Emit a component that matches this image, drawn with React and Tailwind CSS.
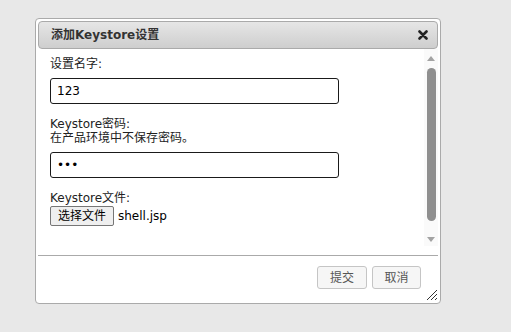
import React from 'react';

const FONT = { fontFamily: '"DejaVu Sans", "Noto Sans CJK SC", sans-serif' };

function CloseIcon() {
  return (
    <svg width="10" height="10" viewBox="0 0 10 10">
      <path d="M1.5 1.5 L8.5 8.5 M8.5 1.5 L1.5 8.5" stroke="#222" strokeWidth="2.6" strokeLinecap="round" />
    </svg>
  );
}

function Arrow({ down }) {
  return (
    <svg width="8" height="5" viewBox="0 0 8 5">
      <path d={down ? 'M0 0 L8 0 L4 5 Z' : 'M0 5 L8 5 L4 0 Z'} fill="#a3a3a3" />
    </svg>
  );
}

function ResizeHandle() {
  return (
    <svg width="12" height="12" viewBox="0 0 12 12" className="absolute right-0 bottom-0">
      <path d="M1 11 L11 1 M5 11 L11 5 M9 11 L11 9" stroke="#333" strokeWidth="1" />
    </svg>
  );
}

export default function App() {
  return (
    <div className="min-h-screen bg-[#e8e8e8] pl-[35px] pt-[18px]" style={FONT}>
      <div className="w-[406px] h-[286px] bg-white border border-[#aaaaaa] rounded-[4px] p-[2px] flex flex-col">
        {/* title bar */}
        <div className="h-[28px] shrink-0 border border-[#aaaaaa] rounded-[4px] bg-linear-to-b from-[#e6e6e6] to-[#cecece] flex items-center justify-between pl-[12px] pr-[9px]">
          <span className="text-[12px] font-bold text-[#333]">添加Keystore设置</span>
          <CloseIcon />
        </div>

        {/* body */}
        <div className="flex-1 flex">
          <div className="flex-1 pl-[12px] pt-[8px] text-[12px] leading-[14px] text-[#222]">
            <div>设置名字:</div>
            <input
              readOnly
              value="123"
              className="mt-[7px] w-[289px] h-[26px] border border-[#1a1a1a] rounded-[3px] px-[6px] text-[12px] text-black outline-none"
            />
            <div className="mt-[13px]">Keystore密码:</div>
            <div>在产品环境中不保存密码。</div>
            <input
              readOnly
              type="password"
              value="123"
              className="mt-[7px] w-[289px] h-[26px] border border-[#1a1a1a] rounded-[3px] px-[6px] text-[12px] text-black outline-none"
            />
            <div className="mt-[13px]">Keystore文件:</div>
            <div className="mt-[1px] flex items-center">
              <button className="h-[20px] w-[64px] bg-[#efefef] border border-[#767676] rounded-[2px] text-[12px] text-black">
                选择文件
              </button>
              <span className="ml-[4px] text-[12px] text-black">shell.jsp</span>
            </div>
          </div>

          {/* scrollbar */}
          <div className="w-[14px] h-[197px] bg-[#fafafa] flex flex-col items-center pt-[7px]">
            <Arrow />
            <div className="mt-[7px] w-[9px] h-[153px] rounded-full bg-[#8f8f8f]" />
            <div className="mt-[16px]">
              <Arrow down />
            </div>
          </div>
        </div>

        {/* footer */}
        <div className="relative h-[46px] shrink-0 border-t border-[#aaaaaa] flex justify-end items-start pt-[10px] pr-[17px] gap-[5px]">
          <button className="w-[50px] h-[23px] bg-[#f6f6f6] border border-[#c5c5c5] rounded-[3px] text-[12px] text-[#555]">
            提交
          </button>
          <button className="w-[49px] h-[23px] bg-[#f6f6f6] border border-[#c5c5c5] rounded-[3px] text-[12px] text-[#555]">
            取消
          </button>
          <ResizeHandle />
        </div>
      </div>
    </div>
  );
}
